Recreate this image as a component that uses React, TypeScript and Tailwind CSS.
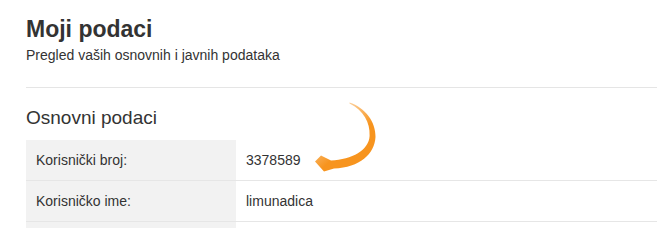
import React from 'react'

const rows = [
  { label: 'Korisnički broj:', value: '3378589' },
  { label: 'Korisničko ime:', value: 'limunadica' },
  { label: '', value: '' },
]

function CurvedArrow() {
  return (
    <svg
      className="absolute left-[300px] top-[95px]"
      width="90"
      height="85"
      viewBox="300 95 90 85"
    >
      <defs>
        <linearGradient id="fade" x1="350" y1="103" x2="370" y2="125" gradientUnits="userSpaceOnUse">
          <stop offset="0" stopColor="#f7941e" stopOpacity="0.45" />
          <stop offset="1" stopColor="#f7941e" stopOpacity="1" />
        </linearGradient>
      </defs>
      <path
        d="M349.5,102.5 C365,107.5 376,122 375.5,137 C374.5,154 360,167.5 334,168.5 L324,171.5 L315,161.5 L321,155.5 L331,160.5 C352,159.5 369,150 369.6,136 C370.2,122 363.5,110.5 349.5,103.5 Z"
        fill="url(#fade)"
      />
    </svg>
  )
}

export default function App() {
  return (
    <div className="relative h-[228px] overflow-hidden bg-white pl-[26px] pt-[15px] text-[#333] font-['Liberation_Sans',Arial,sans-serif]">
      {/* Header */}
      <h1 className="text-[23px] leading-[28px] font-bold text-[#333]">Moji podaci</h1>
      <p className="mt-[2px] text-[14px] leading-[20px]">Pregled vaših osnovnih i javnih podataka</p>

      <div className="mt-[22px] border-t border-[#e5e5e5]" />

      {/* Osnovni podaci */}
      <h2 className="mt-[18px] mb-[10px] text-[19px] leading-[24px] font-normal">Osnovni podaci</h2>

      <div className="text-[14px]">
        {rows.map((row, i) => (
          <div key={i} className="flex h-[41px] border-b border-[#e6e6e6]">
            <div className="w-[210px] shrink-0 bg-[#f2f2f2] pl-[10px] flex items-center">{row.label}</div>
            <div className="flex-1 pl-[10px] flex items-center">{row.value}</div>
          </div>
        ))}
      </div>

      <CurvedArrow />
    </div>
  )
}
